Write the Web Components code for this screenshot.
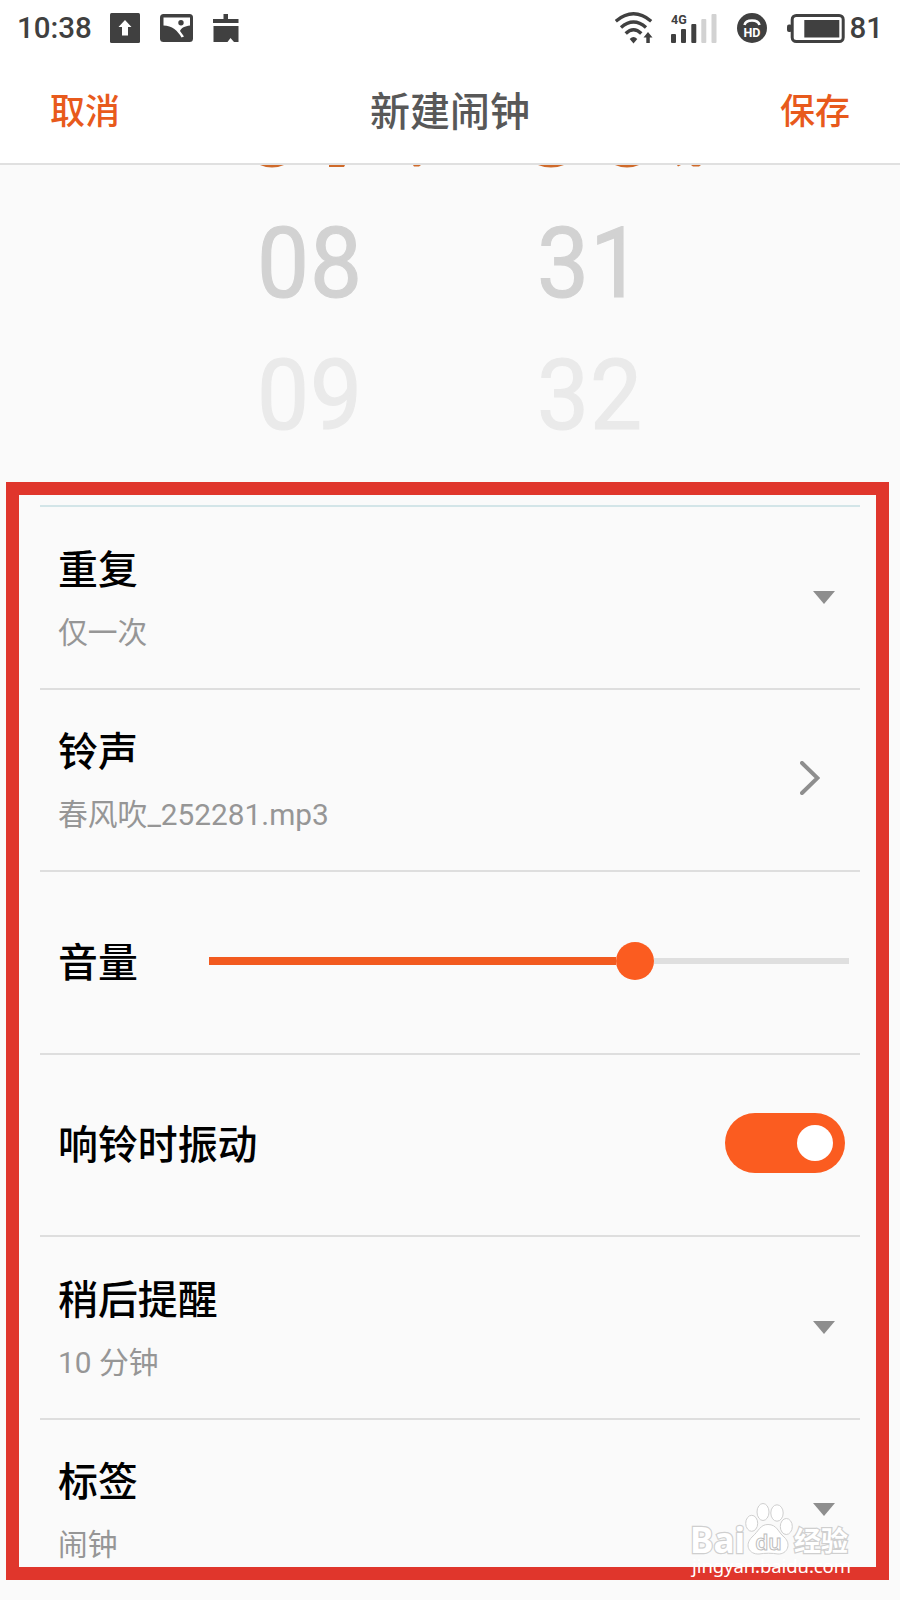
<!DOCTYPE html>
<html lang="zh-CN">
<head>
  <meta charset="utf-8">
  <title>新建闹钟</title>
  <style>
    body {
      margin: 0;
      width: 900px;
      height: 1600px;
      overflow: hidden;
      background-color: #fafafa;
      font-family: Roboto, "Noto Sans CJK SC", sans-serif;
    }
  </style>
</head>
<body>
  <alarm-screen></alarm-screen>

  <script>
    class StatusBar extends HTMLElement {
      constructor() {
        super();
        this.shadowDOM = this.attachShadow({mode: 'open'});
      }
      connectedCallback() {
        this.shadowDOM.innerHTML = `
          <style>
            :host {
              display: flex;
              justify-content: space-between;
              height: 56px;
              padding: 0 17px 0 17px;
              box-sizing: border-box;
              color: #404040;
              font-size: 29.500px;
              font-weight: 500;
              line-height: 56px;
            }
            .group {
              display: flex;
              align-items: center;
            }
            svg {
              display: block;
              fill: #404040;
            }
            .upload { margin-left: 18px; }
            .photo { margin-left: 20px; }
            .clean { margin-left: 20px; }
            .signal { margin-left: 18px; }
            .hd { margin-left: 20px; }
            .battery { margin-left: 20px; margin-right: 4px; }
          </style>
          <div class="group">
            <span>10:38</span>
            <svg class="upload" width="30" height="30" viewBox="0 0 30 30">
              <rect width="30" height="30" rx="1.5"/>
              <path d="M15 7L21.500 14H18V22.500H12V14H8.500Z" fill="#fff"/>
            </svg>
            <svg class="photo" width="33" height="28" viewBox="0 0 33 28">
              <rect width="33" height="28" rx="3.500"/>
              <path d="M3.500 3.500H30V11.500C25 12 21 14 20 17L24 22.500L21.500 23.500C18 17 12 11.500 3.500 11.500Z" fill="#fff"/>
              <circle cx="21" cy="8.700" r="2.700"/>
            </svg>
            <svg class="clean" width="26" height="28" viewBox="0 0 26 28">
              <path d="M10.500 0H15V5H25.500V9H0V5H10.500ZM.5 12H25.500V28H21L17.500 24L14.500 28H.5Z"/>
            </svg>
          </div>
          <div class="group">
            <svg width="38" height="32" viewBox="0 0 38 32">
              <g fill="none" stroke="#404040" stroke-width="3.400">
                <path d="M.8 9.200Q18.500-5.500 36.200 9.200"/>
                <path d="M6 15.500Q18.500 4.500 31 15.500"/>
                <path d="M10.700 21.500Q18.500 14 26.300 21.500"/>
              </g>
              <path d="M14.700 27Q18.500 23 22.300 27L18.500 31.500Z"/>
              <path d="M33 20L37.500 25.500H34.800V31H31.300V25.500H28.500Z"/>
            </svg>
            <svg class="signal" width="46" height="30" viewBox="0 0 46 30">
              <text x="0" y="10.500" font-size="12.500" font-weight="700">4G</text>
              <rect x="0" y="21" width="5" height="9" rx="1"/>
              <rect x="10" y="16" width="5" height="14" rx="1"/>
              <rect x="20.300" y="11" width="5" height="19" rx="1"/>
              <rect x="30.300" y="6" width="5" height="24" rx="1" fill="#d2d2d2"/>
              <rect x="40.500" y="1" width="5" height="29" rx="1" fill="#d2d2d2"/>
            </svg>
            <svg class="hd" width="30" height="30" viewBox="0 0 30 30">
              <circle cx="15" cy="15" r="15"/>
              <path d="M7.500 12C9 6 21 6 22.500 12" fill="none" stroke="#fff" stroke-width="2.600"/>
              <text x="15" y="24" fill="#fff" font-size="12.500" font-weight="700" text-anchor="middle">HD</text>
            </svg>
            <svg class="battery" width="58" height="29" viewBox="0 0 58 29">
              <rect x="5.200" y="1.500" width="51" height="26" rx="4" fill="none" stroke="#404040" stroke-width="3"/>
              <rect x="0" y="10.500" width="5" height="7.500" rx="2"/>
              <rect x="17.300" y="6" width="35" height="17.500"/>
            </svg>
            <span>81</span>
          </div>
        `;
      }
    }
    customElements.define('status-bar', StatusBar);

    class TitleBar extends HTMLElement {
      constructor() {
        super();
        this.shadowDOM = this.attachShadow({mode: 'open'});
      }
      connectedCallback() {
        this.shadowDOM.innerHTML = `
          <style>
            :host {
              display: flex;
              justify-content: space-between;
              align-items: center;
              height: 109px;
              padding: 0 50px 2px;
              box-sizing: border-box;
              border-bottom: 2px solid #e0e0e0;
              color: #e85a1c;
              font-size: 35px;
              font-weight: 500;
            }
            .title {
              color: #585858;
              font-size: 40px;
              font-weight: 500;
            }
          </style>
          <slot name="left"></slot>
          <div class="title"><slot></slot></div>
          <slot name="right"></slot>
        `;
      }
    }
    customElements.define('title-bar', TitleBar);

    // Scrolled time wheel: only the lower rim of the selected line is left at the top
    class TimeWheel extends HTMLElement {
      constructor() {
        super();
        this.shadowDOM = this.attachShadow({mode: 'open'});
      }
      connectedCallback() {
        const [next, last] = this.getAttribute('values').split(',');
        this.shadowDOM.innerHTML = `
          <style>
            :host {
              display: flex;
              flex-direction: column;
              width: 280px;
              font-size: 97.500px;
              color: #d2d2d2;
            }
            svg {
              display: block;
              fill: #cf6a2a;
            }
            .item {
              height: 132px;
              padding-left: 1px;
              line-height: 132px;
              letter-spacing: 1px;
              -webkit-text-stroke: 1.200px;
              transform: scaleX(.95);
              transform-origin: left;
            }
            .next { margin-top: 30px; }
            .last { color: #eaeaea; }
          </style>
          <svg width="190" height="3" viewBox="0 0 190 3"><path d="${this.getAttribute('rim')}"/></svg>
          <div class="item next">${next}</div>
          <div class="item last">${last}</div>
        `;
      }
    }
    customElements.define('time-wheel', TimeWheel);

    class SettingRow extends HTMLElement {
      constructor() {
        super();
        this.shadowDOM = this.attachShadow({mode: 'open'});
      }
      connectedCallback() {
        const detail = this.getAttribute('detail');
        this.shadowDOM.innerHTML = `
          <style>
            :host {
              display: flex;
              align-items: center;
              justify-content: space-between;
              flex: none;
              height: 182.500px;
              padding: 0 11px 2px 18px;
              box-sizing: border-box;
              border-top: 2px solid var(--line, #dedede);
            }
            .title {
              padding-top: 5px;
              color: #000;
              font-size: 39.900px;
              font-weight: 500;
              line-height: 60px;
            }
            .detail {
              margin-top: 12px;
              color: #969696;
              font-size: 29.800px;
              font-weight: 400;
              line-height: 40px;
            }
            .text.double { padding-bottom: 4px; }
          </style>
          <div class="text ${detail ? 'double' : ''}">
            <div class="title">${this.getAttribute('label')}</div>
            ${detail ? `<div class="detail">${detail}</div>` : ''}
          </div>
          <slot></slot>
        `;
      }
    }
    customElements.define('setting-row', SettingRow);

    class DropMark extends HTMLElement {
      constructor() {
        super();
        this.attachShadow({mode: 'open'}).innerHTML = `
          <style>
            :host { display: block; margin: 2px 14px 0 0; }
            svg { display: block; }
          </style>
          <svg width="22" height="13" viewBox="0 0 22 13"><path d="M0 0H22L11 13Z" fill="#8e8e8e"/></svg>
        `;
      }
    }
    customElements.define('drop-mark', DropMark);

    class NextMark extends HTMLElement {
      constructor() {
        super();
        this.attachShadow({mode: 'open'}).innerHTML = `
          <style>
            :host { display: block; margin: 0 29px 2px 0; }
            svg { display: block; }
          </style>
          <svg width="20" height="34" viewBox="0 0 20 34">
            <path d="M2 2L17.500 17L2 32" fill="none" stroke="#8e8e8e" stroke-width="4" stroke-linecap="round"/>
          </svg>
        `;
      }
    }
    customElements.define('next-mark', NextMark);

    class VolumeSlider extends HTMLElement {
      constructor() {
        super();
        this.attachShadow({mode: 'open'}).innerHTML = `
          <style>
            :host {
              display: flex;
              align-items: center;
              width: 640px;
            }
            .filled {
              width: 407px;
              height: 8px;
              background-color: #f25a1f;
            }
            .knob {
              width: 38px;
              height: 38px;
              border-radius: 50%;
              background-color: #fb5c20;
            }
            .rest {
              flex: 1;
              height: 6px;
              background-color: #dfdfdf;
            }
          </style>
          <div class="filled"></div>
          <div class="knob"></div>
          <div class="rest"></div>
        `;
      }
    }
    customElements.define('volume-slider', VolumeSlider);

    class ToggleSwitch extends HTMLElement {
      constructor() {
        super();
        this.attachShadow({mode: 'open'}).innerHTML = `
          <style>
            :host {
              display: flex;
              align-items: center;
              justify-content: flex-end;
              width: 120px;
              height: 60px;
              padding-right: 12px;
              margin: 0 4px 1px 0;
              box-sizing: border-box;
              border-radius: 30px;
              background-color: #fb5c20;
            }
            .knob {
              width: 36px;
              height: 36px;
              border-radius: 50%;
              background-color: #fff;
            }
          </style>
          <div class="knob"></div>
        `;
      }
    }
    customElements.define('toggle-switch', ToggleSwitch);

    class SiteMark extends HTMLElement {
      constructor() {
        super();
        this.attachShadow({mode: 'open'}).innerHTML = `
          <style>
            :host { display: block; }
            svg { display: block; font-family: "Noto Sans", "Noto Sans CJK SC", sans-serif; }
          </style>
          <svg width="172" height="84" viewBox="0 0 172 84">
            <g fill="#fff" stroke="#cfcfcf" stroke-width="1">
              <g font-weight="700" paint-order="stroke" stroke-width="2.400">
                <text x="2" y="53" font-size="36" textLength="55" lengthAdjust="spacingAndGlyphs">Bai</text>
                <text x="106" y="51" font-size="27">经验</text>
              </g>
              <ellipse cx="63.700" cy="23.300" rx="6" ry="8"/>
              <ellipse cx="75" cy="12" rx="6" ry="8.500"/>
              <ellipse cx="89" cy="13" rx="6.200" ry="8.200"/>
              <ellipse cx="98.300" cy="26.500" rx="6" ry="8"/>
              <path d="M80 24.500C89 24.500 90 32 96 37C104 44 99 54.500 90 54C84 53 77 53 71 54C61 54.500 56 45 64 37C71 31 72 24.500 80 24.500Z"/>
              <text x="80.500" y="49.500" font-size="21" font-weight="600" text-anchor="middle" stroke="#bdbdbd">du</text>
            </g>
            <text x="4" y="73" font-size="18.500" fill="#fff" textLength="159">jingyan.baidu.com</text>
          </svg>
        `;
      }
    }
    customElements.define('site-mark', SiteMark);

    class AlarmScreen extends HTMLElement {
      constructor() {
        super();
        this.shadowDOM = this.attachShadow({mode: 'open'});
      }
      connectedCallback() {
        this.shadowDOM.innerHTML = `
          <style>
            :host {
              display: flex;
              flex-direction: column;
              position: relative;
              height: 1600px;
            }
            header {
              background-color: #fff;
            }
            .wheels {
              display: flex;
              height: 317px;
              padding-left: 256px;
              box-sizing: border-box;
              overflow: hidden;
            }
            .settings {
              display: flex;
              flex-direction: column;
              height: 1098px;
              margin: 0 11px 0 6px;
              padding: 10px 16px 0 21px;
              box-sizing: border-box;
              border: 13px solid #e0362c;
              overflow: hidden;
            }
            .first { --line: #d3e5e8; }
            site-mark {
              position: absolute;
              left: 688px;
              top: 1500px;
            }
          </style>
          <header>
            <status-bar></status-bar>
            <title-bar>
              <span slot="left">取消</span>
              新建闹钟
              <span slot="right">保存</span>
            </title-bar>
          </header>
          <div class="wheels">
            <time-wheel values="08,09" rim="M4 0H28Q16 5 4 0ZM73 0H89L88 2H73ZM157 0H165L163 1.500H158Z"></time-wheel>
            <time-wheel values="31,32" rim="M2 0H28Q15 5 2 0ZM79 0H103Q91 5 79 0ZM141 0H145L142 1.500ZM155 0H165L163 1.500H157Z"></time-wheel>
          </div>
          <div class="settings">
            <setting-row class="first" label="重复" detail="仅一次"><drop-mark></drop-mark></setting-row>
            <setting-row label="铃声" detail="春风吹_252281.mp3"><next-mark></next-mark></setting-row>
            <setting-row label="音量"><volume-slider></volume-slider></setting-row>
            <setting-row label="响铃时振动"><toggle-switch></toggle-switch></setting-row>
            <setting-row label="稍后提醒" detail="10 分钟"><drop-mark></drop-mark></setting-row>
            <setting-row label="标签" detail="闹钟"><drop-mark></drop-mark></setting-row>
          </div>
          <site-mark></site-mark>
        `;
      }
    }
    customElements.define('alarm-screen', AlarmScreen);
  </script>
</body>
</html>
